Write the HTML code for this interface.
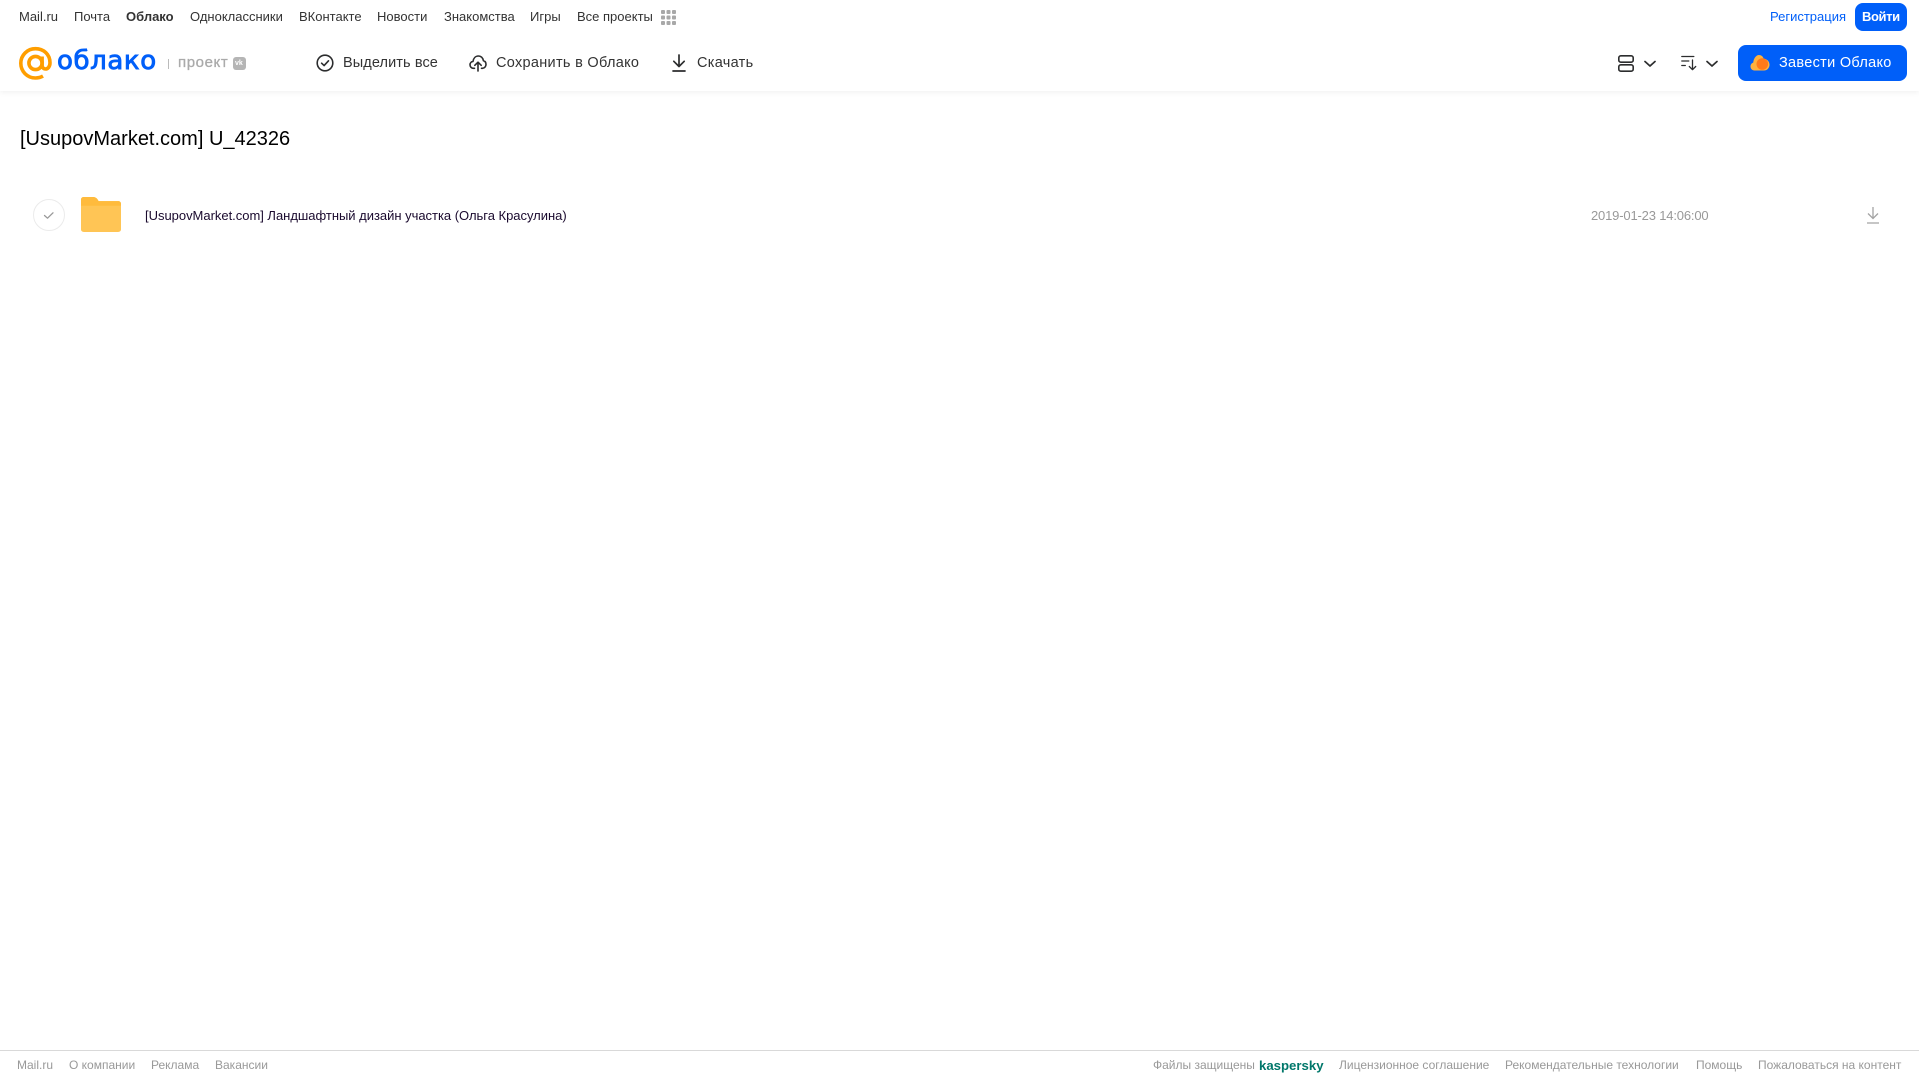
<!DOCTYPE html>
<html lang="ru">
<head>
<meta charset="utf-8">
<title>Облако</title>
<style>
html,body{margin:0;padding:0;background:#fff;}
body{position:relative;width:1919px;height:1079px;overflow:hidden;font-family:"Liberation Sans","Noto Sans CJK SC",sans-serif;}
.t{position:absolute;white-space:nowrap;line-height:1;}
.n{font-size:13px;color:#333;top:10px;}
.a{font-size:14.5px;color:#333;top:56px;letter-spacing:.3px;}
.f{font-size:12px;color:#999;top:1059px;}
svg{position:absolute;overflow:visible;}
#hdr{position:absolute;left:0;top:0;width:1919px;height:91px;background:#fff;box-shadow:0 1px 6px rgba(0,0,0,.07);}
#ftl{position:absolute;left:0;top:1050px;width:1919px;height:1px;background:#d9d9d9;}
</style>
</head>
<body>
<div id="hdr"></div>
<span class="t n" style="left:19px">Mail.ru</span>
<span class="t n" style="left:74px">Почта</span>
<span class="t n" style="left:126px;font-weight:bold">Облако</span>
<span class="t n" style="left:190px">Одноклассники</span>
<span class="t n" style="left:299px">ВКонтакте</span>
<span class="t n" style="left:377px">Новости</span>
<span class="t n" style="left:444px">Знакомства</span>
<span class="t n" style="left:530px">Игры</span>
<span class="t n" style="left:577px">Все проекты</span>
<svg style="left:661px;top:10px" width="15" height="15" fill="#a8a8a8"><rect width="4" height="4" rx="1"/><rect x="5.5" width="4" height="4" rx="1"/><rect x="11" width="4" height="4" rx="1"/><rect y="5.5" width="4" height="4" rx="1"/><rect x="5.5" y="5.5" width="4" height="4" rx="1"/><rect x="11" y="5.5" width="4" height="4" rx="1"/><rect y="11" width="4" height="4" rx="1"/><rect x="5.5" y="11" width="4" height="4" rx="1"/><rect x="11" y="11" width="4" height="4" rx="1"/></svg>
<span class="t n" style="left:1770px;color:#005ff9">Регистрация</span>
<div style="position:absolute;left:1855px;top:3px;width:52px;height:28px;border-radius:8px;background:#005ff9"></div>
<span class="t n" style="left:1862px;color:#fff;font-weight:bold;letter-spacing:-.4px">Войти</span>

<svg style="left:19px;top:47px" width="33" height="33" viewBox="0 0 33 33" fill="none" stroke="#ff9e00" stroke-width="3.6"><circle cx="16.5" cy="16" r="6.6"/><path d="M23.1 9.5v8.500c0 2.600 1.500 4 3.400 4 2.500 0 4.500-2.600 4.500-6.200C31 7.400 24.600 1.700 16.500 1.700S1.800 8.100 1.800 16.300 8.300 31 16.500 31c2.900 0 5.400-.7 7.500-1.900"/></svg>
<span class="t" style="left:57px;top:48px;font-family:'DejaVu Sans',sans-serif;font-size:26px;color:#005ff9;-webkit-text-stroke:.9px #005ff9;letter-spacing:.6px">облако</span>
<div style="position:absolute;left:168px;top:59px;width:1px;height:10px;background:#bbb"></div>
<span class="t" style="left:178px;top:55px;font-size:15px;color:#aaa;letter-spacing:.6px;-webkit-text-stroke:.3px #aaa">проект</span>
<div style="position:absolute;left:233px;top:57px;width:13px;height:13px;border-radius:3px;background:#b5b5b5"></div>
<span class="t" style="left:235px;top:60px;font-size:7px;font-weight:bold;color:#fff">vk</span>

<svg style="left:316px;top:54px" width="18" height="18" fill="none" stroke="#2c2d2e" stroke-width="1.600"><circle cx="9" cy="9" r="7.800"/><path d="M5.600 9.200l2.500 2.400 4.400-4.800" stroke-linecap="round" stroke-linejoin="round"/></svg>
<span class="t a" style="left:343px;letter-spacing:.1px">Выделить все</span>
<svg style="left:469px;top:54px" width="18" height="18" fill="none" stroke="#2c2d2e" stroke-width="1.600" stroke-linecap="round" stroke-linejoin="round"><path d="M5.500 14.300H4.600C2.500 14.300 1 12.700 1 10.800c0-1.800 1.300-3.200 3-3.400C4.500 4.300 6.500 2 9.300 2c2.700 0 4.800 2 5.100 4.700 1.500.4 2.600 1.900 2.600 3.700 0 2.100-1.500 3.900-3.500 3.900h-1"/><path d="M9 17V8.500M5.800 11.300 9 8.200l3.200 3.100"/></svg>
<span class="t a" style="left:496px">Сохранить в Облако</span>
<svg style="left:672px;top:54px" width="14" height="18" fill="none" stroke="#2c2d2e" stroke-width="1.700" stroke-linecap="round" stroke-linejoin="round"><path d="M7 1v11M1.800 7.300 7 12.500l5.200-5.200M1 17h12"/></svg>
<span class="t a" style="left:697px">Скачать</span>

<svg style="left:1618px;top:55px" width="16" height="17" fill="none" stroke="#2c2d2e" stroke-width="1.600"><rect x=".8" y=".8" width="14.400" height="6.400" rx="2"/><rect x=".8" y="9.800" width="14.400" height="6.400" rx="2"/></svg>
<svg style="left:1644px;top:60px" width="12" height="8" fill="none" stroke="#2c2d2e" stroke-width="1.700" stroke-linecap="round" stroke-linejoin="round"><path d="M1 1.500l5 4.500 5-4.500"/></svg>
<svg style="left:1681px;top:55px" width="16" height="16" fill="none" stroke="#2c2d2e" stroke-width="1.300" stroke-linecap="round" stroke-linejoin="round"><path d="M.8 1.500h12M.8 6h7M.8 10.500h3.500M11.500 5v9.500M8.300 11.500l3.200 3.200 3.200-3.200"/></svg>
<svg style="left:1706px;top:60px" width="12" height="8" fill="none" stroke="#2c2d2e" stroke-width="1.700" stroke-linecap="round" stroke-linejoin="round"><path d="M1 1.500l5 4.500 5-4.500"/></svg>

<div style="position:absolute;left:1738px;top:45px;width:169px;height:36px;border-radius:8px;background:#005ff9"></div>
<svg style="left:1750px;top:54px" width="20" height="17"><path d="M4.500 16.500C2 16.500.5 14.500.5 12.500c0-2 1.200-3.400 2.700-3.900C3.700 4.500 6 1 9 1c2.300 0 4 1.500 4.700 3.700 3.200.2 5.800 2.500 5.800 6 0 3.300-2.500 5.800-5.500 5.800z" fill="#ffb13d"/><circle cx="12.300" cy="10" r="5.800" fill="#ff7a1a"/></svg>
<span class="t a" style="left:1779px;color:#fff">Завести Облако</span>

<span class="t" style="left:20px;top:129px;font-size:20px;color:#000">[UsupovMarket.com] U_42326</span>

<svg style="left:33px;top:199px" width="32" height="32" fill="none"><circle cx="16" cy="16" r="15.500" stroke="#ebebeb" stroke-width="1"/><path d="M11.500 16.500l3 2.700 5.500-5.400" stroke="#999" stroke-width="1.300" stroke-linecap="round" stroke-linejoin="round"/></svg>
<svg style="left:81px;top:197px" width="40" height="35" viewBox="0 0 34 34" preserveAspectRatio="none"><path d="M2.500 0h7.500c2 0 3 .8 4 2.200L15 4h16.500C33 4 34 5 34 6.500V31.500C34 33 33 34 31.500 34h-29C1 34 0 33 0 31.500V2.500C0 1 1 0 2.500 0z" fill="#ffc555"/><path d="M0 8.500h34V6.500C34 5 33 4 31.500 4H15l-1-1.800C13 .8 12 0 10 0H2.500C1 0 0 1 0 2.500z" fill="#ffbb3d"/></svg>
<span class="t" style="left:145px;top:209px;font-size:13px;color:#1a0a2e;letter-spacing:-.02px">[UsupovMarket.com] Ландшафтный дизайн участка (Ольга Красулина)</span>
<span class="t" style="left:1591px;top:209px;font-size:13px;color:#999;letter-spacing:-.17px">2019-01-23 14:06:00</span>
<svg style="left:1866px;top:206px" width="14" height="18" fill="none" stroke="#a3a3a3" stroke-width="1.300"><path d="M7 1v11M2 7.500 7 12.500l5-5M1 17h12"/></svg>

<div id="ftl"></div>
<span class="t f" style="left:17px">Mail.ru</span>
<span class="t f" style="left:69px">О компании</span>
<span class="t f" style="left:151px">Реклама</span>
<span class="t f" style="left:215px">Вакансии</span>
<span class="t f" style="left:1153px">Файлы защищены</span>
<span class="t f" style="left:1259px;top:1059px;font-size:13.200px;font-weight:bold;color:#00776a">kaspersky</span>
<span class="t f" style="left:1339px">Лицензионное соглашение</span>
<span class="t f" style="left:1505px">Рекомендательные технологии</span>
<span class="t f" style="left:1696px">Помощь</span>
<span class="t f" style="left:1758px">Пожаловаться на контент</span>
</body>
</html>
